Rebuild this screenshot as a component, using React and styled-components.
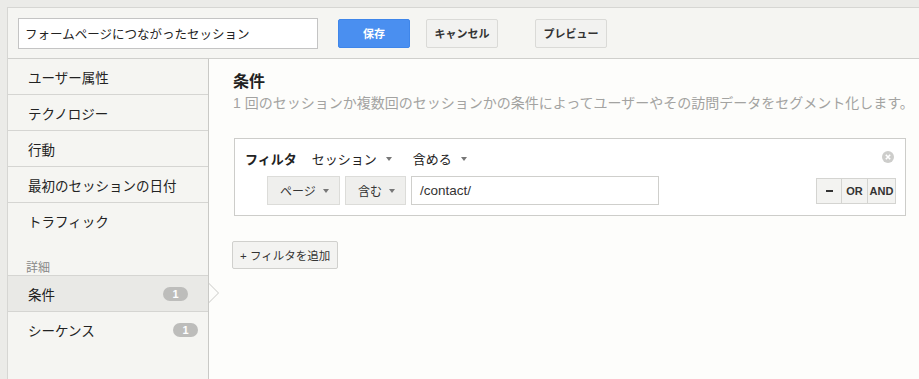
import React from "react";
import styled, { createGlobalStyle } from "styled-components";

const GlobalStyle = createGlobalStyle`
  html, body {
    margin: 0;
    padding: 0;
    height: 100%;
    background: #ebebe8;
  }
  #root {
    height: 100%;
  }
  * {
    box-sizing: border-box;
  }
`;

const FONT = `"Liberation Sans", "Noto Sans CJK JP", sans-serif`;

const Page = styled.div`
  height: 100vh;
  padding: 7px 0 0 7px;
  display: flex;
  font-family: ${FONT};
  color: #222;
`;

const Frame = styled.div`
  flex: 1;
  display: flex;
  flex-direction: column;
  border-top: 1px solid #d6d6d3;
  border-left: 1px solid #d6d6d3;
  min-height: 0;
  min-width: 0;
`;

const TopBar = styled.div`
  height: 51px;
  flex-shrink: 0;
  display: flex;
  align-items: center;
  padding-left: 10px;
  background: #f5f5f2;
  border-bottom: 1px solid #cfcfcc;
`;

const NameInput = styled.div`
  width: 300px;
  height: 31px;
  display: flex;
  align-items: center;
  padding-left: 6px;
  background: #fff;
  border: 1px solid #c4c4c4;
  font-size: 12.5px;
  color: #222;
  margin-right: 20px;
`;

const TopButton = styled.button`
  width: 72px;
  height: 29px;
  margin-right: ${(p) => p.$gap || 0}px;
  border-radius: 2px;
  font-family: ${FONT};
  font-size: 11px;
  font-weight: bold;
  padding: 0;
  cursor: pointer;
  background: ${(p) => (p.$primary ? "#4a8ff0" : "#f2f2f0")};
  color: ${(p) => (p.$primary ? "#fff" : "#333")};
  border: 1px solid ${(p) => (p.$primary ? "#3f86ea" : "#dadad7")};
`;

const Body = styled.div`
  flex: 1;
  display: flex;
  min-height: 0;
`;

const Sidebar = styled.div`
  width: 201px;
  flex-shrink: 0;
  background: #f5f5f2;
  border-right: 1px solid #c9c9c6;
  display: flex;
  flex-direction: column;
`;

const NavItem = styled.div`
  position: relative;
  height: 36px;
  display: flex;
  align-items: center;
  justify-content: space-between;
  padding: 0 ${(p) => (p.$active ? 20 : 10)}px 0 20px;
  font-size: 13.5px;
  color: #222;
  background: ${(p) => (p.$active ? "#e9e9e6" : "transparent")};
  border-bottom: ${(p) => (p.$last ? "none" : "1px solid #d5d5d2")};

  ${(p) =>
    p.$active &&
    `
    &::before {
      content: "";
      position: absolute;
      right: -11px;
      top: 7px;
      border-style: solid;
      border-width: 10px 0 10px 10px;
      border-color: transparent transparent transparent #c9c9c6;
    }
    &::after {
      content: "";
      position: absolute;
      right: -10px;
      top: 8px;
      border-style: solid;
      border-width: 9px 0 9px 9px;
      border-color: transparent transparent transparent #fdfdfb;
    }
  `}
`;

const SectionLabel = styled.div`
  margin-top: 22px;
  padding: 0 0 0 18px;
  font-size: 12px;
  line-height: 14px;
  color: #888;
  border-bottom: 1px solid #d5d5d2;
`;

const Badge = styled.span`
  min-width: 25px;
  height: 14px;
  padding: 0 8px;
  border-radius: 7px;
  background: #bdbdbb;
  color: #fff;
  font-size: 11px;
  font-weight: bold;
  display: inline-flex;
  align-items: center;
  justify-content: center;
`;

const Main = styled.div`
  flex: 1;
  min-width: 0;
  background: #fdfdfb;
  padding: 12px 13px 0 24px;
`;

const Title = styled.h2`
  margin: 0;
  font-size: 16px;
  font-weight: bold;
  line-height: 22px;
  color: #222;
`;

const Description = styled.p`
  margin: 0;
  font-size: 14px;
  line-height: 20px;
  color: #a3a3a1;
  white-space: nowrap;
`;

const FilterBox = styled.div`
  margin-top: 25px;
  margin-left: 1px;
  height: 78px;
  border: 1px solid #cdcdca;
  background: #fff;
  padding: 6px 9px 0 10px;
  display: flex;
  flex-direction: column;
`;

const FilterHead = styled.div`
  height: 27px;
  display: flex;
  align-items: center;
  font-size: 13px;
  color: #222;
`;

const FilterLabel = styled.span`
  font-weight: bold;
  margin-right: 15px;
`;

const Menu = styled.span`
  display: inline-flex;
  align-items: center;
  gap: 9px;
  margin-right: 21px;
`;

const Caret = styled.span`
  display: inline-block;
  border-style: solid;
  border-width: 4px 3.5px 0 3.5px;
  border-color: #777 transparent transparent transparent;
`;

const CloseIcon = styled.svg`
  margin-left: auto;
  margin-right: 2px;
  margin-top: -4px;
`;

const FilterRow = styled.div`
  margin-top: 4px;
  padding-left: 22px;
  display: flex;
  align-items: center;
  gap: 5px;
`;

const Select = styled.div`
  width: ${(p) => p.$w}px;
  height: 29px;
  display: flex;
  align-items: center;
  justify-content: space-between;
  padding: 0 10px 0 12px;
  background: #efefed;
  border: 1px solid #dcdcd9;
  font-size: 12px;
  color: #333;
`;

const ValueInput = styled.div`
  width: 248px;
  height: 29px;
  display: flex;
  align-items: center;
  padding-left: 8px;
  background: #fff;
  border: 1px solid #cfcfcc;
  font-size: 13.5px;
  color: #333;
`;

const LogicGroup = styled.div`
  margin-left: auto;
  display: flex;
  border: 1px solid #d4d4d1;
`;

const LogicButton = styled.span`
  width: ${(p) => p.$w}px;
  height: 24px;
  display: flex;
  align-items: center;
  justify-content: center;
  background: #f3f3f1;
  border-left: ${(p) => (p.$first ? "none" : "1px solid #d4d4d1")};
  font-size: 11px;
  font-weight: bold;
  color: #333;
`;

const Dash = styled.span`
  width: 7px;
  height: 2px;
  background: #333;
`;

const AddButton = styled.button`
  margin-top: 25px;
  margin-left: -1px;
  height: 28px;
  padding: 0 7px;
  background: #f3f3f1;
  border: 1px solid #d0d0cd;
  border-radius: 2px;
  font-family: ${FONT};
  font-size: 11.5px;
  color: #333;
  cursor: pointer;
`;

const navItems = ["ユーザー属性", "テクノロジー", "行動", "最初のセッションの日付", "トラフィック"];

export default function App() {
  return (
    <>
      <GlobalStyle />
      <Page>
        <Frame>
          <TopBar>
            <NameInput>フォームページにつながったセッション</NameInput>
            <TopButton $primary $gap={16}>保存</TopButton>
            <TopButton $gap={37}>キャンセル</TopButton>
            <TopButton>プレビュー</TopButton>
          </TopBar>
          <Body>
            <Sidebar>
              {navItems.map((item, i) => (
                <NavItem key={item} $last={i === navItems.length - 1}>
                  {item}
                </NavItem>
              ))}
              <SectionLabel>詳細</SectionLabel>
              <NavItem $active>
                条件
                <Badge>1</Badge>
              </NavItem>
              <NavItem $last>
                シーケンス
                <Badge>1</Badge>
              </NavItem>
            </Sidebar>
            <Main>
              <Title>条件</Title>
              <Description>
                1 回のセッションか複数回のセッションかの条件によってユーザーやその訪問データをセグメント化します。
              </Description>
              <FilterBox>
                <FilterHead>
                  <FilterLabel>フィルタ</FilterLabel>
                  <Menu>
                    セッション <Caret />
                  </Menu>
                  <Menu>
                    含める <Caret />
                  </Menu>
                  <CloseIcon width="12" height="12" viewBox="0 0 12 12">
                    <circle cx="6" cy="6" r="6" fill="#cdcdcb" />
                    <path d="M3.8 3.8 L8.2 8.2 M8.2 3.8 L3.8 8.2" stroke="#fff" strokeWidth="1.6" />
                  </CloseIcon>
                </FilterHead>
                <FilterRow>
                  <Select $w={73}>
                    ページ <Caret />
                  </Select>
                  <Select $w={61}>
                    含む <Caret />
                  </Select>
                  <ValueInput>/contact/</ValueInput>
                  <LogicGroup>
                    <LogicButton $first $w={24}>
                      <Dash />
                    </LogicButton>
                    <LogicButton $w={26}>OR</LogicButton>
                    <LogicButton $w={28}>AND</LogicButton>
                  </LogicGroup>
                </FilterRow>
              </FilterBox>
              <AddButton>+ フィルタを追加</AddButton>
            </Main>
          </Body>
        </Frame>
      </Page>
    </>
  );
}
